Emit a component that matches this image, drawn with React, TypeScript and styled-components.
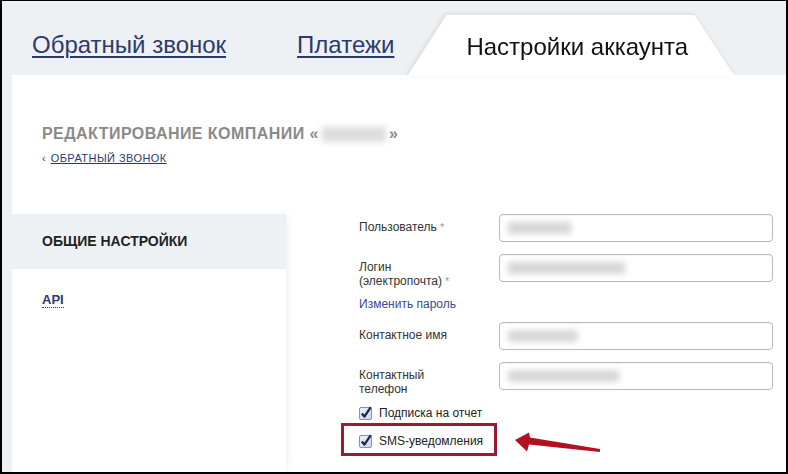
import React from 'react';
import styled, { createGlobalStyle } from 'styled-components';

const GlobalStyle = createGlobalStyle`
  html, body {
    margin: 0;
    padding: 0;
    background: #fff;
  }
  body {
    font-family: "Liberation Sans", Arial, sans-serif;
    color: #333;
  }
`;

const Frame = styled.div`
  width: 788px;
  height: 474px;
  box-sizing: border-box;
  border: 2px solid #000;
  border-top-width: 1px;
  background: #eef1f4;
  display: flex;
  flex-direction: column;
  overflow: hidden;
`;

const TabBar = styled.div`
  height: 74px;
  flex-shrink: 0;
  display: flex;
  align-items: flex-start;
  padding-left: 30px;
`;

const TabLink = styled.a<{ $gap: number }>`
  margin-top: 30px;
  margin-right: ${p => p.$gap}px;
  font-size: 24px;
  line-height: 28px;
  color: #2c3a6e;
  text-decoration: underline;
  text-underline-offset: 3px;
  text-decoration-thickness: 2px;
  cursor: pointer;
`;

const ActiveTabShadow = styled.div`
  margin-top: 14px;
  filter: drop-shadow(-1px -1px 2px rgba(0, 0, 0, 0.1));
`;

const ActiveTab = styled.div`
  width: 327px;
  height: 61px;
  box-sizing: border-box;
  padding: 18px 0 0 59px;
  background: #fff;
  clip-path: polygon(39px 0, 287px 0, 100% 100%, 0 100%);
  font-size: 24px;
  line-height: 28px;
  color: #111;
`;

const Panel = styled.div`
  flex: 1;
  margin-left: 10px;
  background: #fff;
  display: flex;
  flex-direction: column;
`;

const Header = styled.div`
  padding: 50px 30px 0;
`;

const Title = styled.h1`
  margin: 0;
  display: flex;
  align-items: center;
  font-size: 16px;
  line-height: 18px;
  letter-spacing: 0.45px;
  font-weight: bold;
  color: #8a8a8a;
  text-transform: uppercase;
`;

const Blurred = styled.span<{ $w: number; $h?: number; $tone?: string }>`
  display: inline-block;
  width: ${p => p.$w}px;
  height: ${p => p.$h ?? 12}px;
  margin: 0 3px;
  background: ${p => p.$tone ?? '#d6d6d6'};
  filter: blur(3px);
`;

const Crumb = styled.div`
  margin-top: 8px;
  font-size: 11px;
  line-height: 14px;
  color: #2c3a6e;

  a {
    color: inherit;
    text-decoration: underline;
    letter-spacing: 0.45px;
    margin-left: 5px;
  }
`;

const Body = styled.div`
  flex: 1;
  display: flex;
  margin-top: 49px;
`;

const Sidebar = styled.div`
  width: 274px;
  flex-shrink: 0;
  display: flex;
  flex-direction: column;
  box-shadow: 5px 0 8px -3px rgba(0, 0, 0, 0.07);
`;

const SideHead = styled.div`
  height: 55px;
  display: flex;
  align-items: center;
  padding-left: 30px;
  background: #eef1f4;
  font-size: 14px;
  line-height: 17px;
  font-weight: bold;
  color: #222;
`;

const SideBody = styled.div`
  flex: 1;
  padding: 21px 0 0 30px;
`;

const SideLink = styled.a`
  font-size: 13px;
  line-height: 16px;
  font-weight: bold;
  color: #2c3a6e;
  text-decoration: none;
  border-bottom: 1px dotted #2c3a6e;
`;

const Form = styled.div`
  display: flex;
  flex-direction: column;
  padding-left: 73px;
  font-size: 12px;
  line-height: 14px;
`;

const FieldRow = styled.div<{ $mt: number }>`
  display: flex;
  margin-top: ${p => p.$mt}px;
`;

const Label = styled.label`
  width: 140px;
  padding-top: 6px;
  color: #333;
`;

const Req = styled.span`
  color: #999;
  font-size: 11px;
  margin-left: 3px;
`;

const TextField = styled.div`
  width: 274px;
  height: 28px;
  box-sizing: border-box;
  border: 1px solid #b9b9b9;
  border-radius: 4px;
  display: flex;
  align-items: center;
  padding-left: 5px;
  box-shadow: inset 0 1px 1px rgba(0, 0, 0, 0.04);
`;

const PassLink = styled.a`
  margin-top: 9px;
  color: #3b4a86;
  text-decoration: none;
  align-self: flex-start;
`;

const CheckRow = styled.div<{ $mt: number }>`
  position: relative;
  align-self: flex-start;
  display: flex;
  align-items: center;
  gap: 6px;
  margin-top: ${p => p.$mt}px;
  color: #222;
`;

const Highlight = styled.span`
  position: absolute;
  top: -11px;
  bottom: -8px;
  left: -18px;
  right: -14px;
  border: 3px solid #9e1a31;
  pointer-events: none;
`;

const Arrow = styled.svg`
  position: absolute;
  left: 151px;
  top: -5px;
  overflow: visible;
`;

const CheckIcon = () => (
  <svg width="14" height="14" viewBox="0 0 14 14">
    <defs>
      <linearGradient id="cbg" x1="0" y1="0" x2="1" y2="1">
        <stop offset="0" stopColor="#eef3fa" />
        <stop offset="1" stopColor="#c9d6e8" />
      </linearGradient>
    </defs>
    <rect x="0.5" y="1.5" width="12" height="12" rx="1.5" fill="url(#cbg)" stroke="#8193b0" />
    <path d="M2.8 7.4 L5.4 10.6 L11.8 1.2" fill="none" stroke="#1d2656" strokeWidth="2.3" strokeLinejoin="round" />
  </svg>
);

const fields = [
  { label: <>Пользователь<Req>*</Req></>, blur: 63, mt: 0 },
  { label: <>Логин<br />(электропочта)<Req>*</Req></>, blur: 117, mt: 12 },
];

const fields2 = [
  { label: <>Контактное имя</>, blur: 70, mt: 11 },
  { label: <>Контактный<br />телефон</>, blur: 111, mt: 12 },
];

export default function App() {
  return (
    <>
      <GlobalStyle />
      <Frame>
        <TabBar>
          <TabLink $gap={71}>Обратный звонок</TabLink>
          <TabLink $gap={13}>Платежи</TabLink>
          <ActiveTabShadow>
            <ActiveTab>Настройки аккаунта</ActiveTab>
          </ActiveTabShadow>
        </TabBar>
        <Panel>
          <Header>
            <Title>
              Редактирование компании «<Blurred $w={64} $h={15} $tone="#dcdcdc" />»
            </Title>
            <Crumb>
              ‹<a>ОБРАТНЫЙ ЗВОНОК</a>
            </Crumb>
          </Header>
          <Body>
            <Sidebar>
              <SideHead>ОБЩИЕ НАСТРОЙКИ</SideHead>
              <SideBody>
                <SideLink>API</SideLink>
              </SideBody>
            </Sidebar>
            <Form>
              {fields.map((f, i) => (
                <FieldRow key={i} $mt={f.mt}>
                  <Label>{f.label}</Label>
                  <TextField>
                    <Blurred $w={f.blur} />
                  </TextField>
                </FieldRow>
              ))}
              <PassLink>Изменить пароль</PassLink>
              {fields2.map((f, i) => (
                <FieldRow key={i} $mt={f.mt}>
                  <Label>{f.label}</Label>
                  <TextField>
                    <Blurred $w={f.blur} />
                  </TextField>
                </FieldRow>
              ))}
              <CheckRow $mt={10}>
                <CheckIcon />
                Подписка на отчет
              </CheckRow>
              <CheckRow $mt={14}>
                <CheckIcon />
                SMS-уведомления
                <Highlight />
                <Arrow width="90" height="24" viewBox="0 0 90 24">
                  <path
                    d="M5 11 L19 3.5 L20 8.5 L90 20 L90 23 L19 15.5 L17 22.5 Z"
                    fill="#b3111f"
                  />
                </Arrow>
              </CheckRow>
            </Form>
          </Body>
        </Panel>
      </Frame>
    </>
  );
}
